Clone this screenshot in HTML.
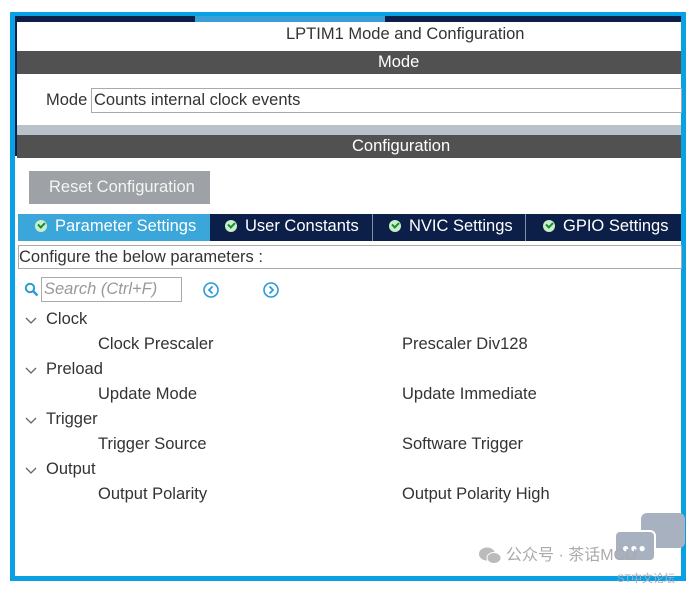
<!DOCTYPE html>
<html><head><style>
*{margin:0;padding:0;box-sizing:border-box}
body{width:693px;height:595px;background:#fff;position:relative;overflow:hidden;font-family:"Liberation Sans","Noto Sans CJK SC",sans-serif;color:#333}
.a{position:absolute}
.t{font-size:16.5px;white-space:nowrap;line-height:19px}
.ck{display:inline-block;width:12px;height:12px;border-radius:50%;background:#c8f0c8;vertical-align:-1px;margin-right:8px;position:relative}
.ck:after{content:"";position:absolute;left:3px;top:2px;width:5px;height:3px;border-left:2px solid #1a8a3a;border-bottom:2px solid #1a8a3a;transform:rotate(-45deg)}
</style></head><body>
<div class="a" style="left:10px;top:12px;width:676px;height:569px;background:#0aa0e4"></div>
<div class="a" style="left:15px;top:16px;width:666px;height:560px;background:#fff"></div>
<div class="a" style="left:15px;top:16px;width:666px;height:6px;background:#0c1f48"></div>
<div class="a" style="left:195px;top:16px;width:190px;height:6px;background:#3a9fd6"></div>
<div class="a" style="left:15px;top:16px;width:2px;height:140px;background:#0c1f48"></div>
<div class="a t" style="left:286px;top:25px;color:#333">LPTIM1 Mode and Configuration</div>
<div class="a" style="left:17px;top:51px;width:664px;height:23px;background:#505150"></div>
<div class="a t" style="left:378px;top:53px;color:#fff">Mode</div>
<div class="a t" style="left:46px;top:91px">Mode</div>
<div class="a" style="left:91px;top:88px;width:591px;height:25px;border:1px solid #aaa"></div>
<div class="a t" style="left:94px;top:91px">Counts internal clock events</div>
<div class="a" style="left:17px;top:125px;width:664px;height:10px;background:#b9c2ca"></div>
<div class="a" style="left:17px;top:135px;width:664px;height:23px;background:#505150"></div>
<div class="a t" style="left:352px;top:137px;color:#fff">Configuration</div>
<div class="a" style="left:29px;top:171px;width:181px;height:33px;background:#9ea2a6"></div>
<div class="a t" style="left:49px;top:178px;color:#f4f4f4">Reset Configuration</div>
<div class="a" style="left:18px;top:214px;width:663px;height:27px;background:#0c1f48"></div>
<div class="a" style="left:18px;top:214px;width:192px;height:27px;background:#3aa6da"></div>
<div class="a" style="left:372px;top:214px;width:1px;height:27px;background:#8090a8"></div>
<div class="a" style="left:525px;top:214px;width:1px;height:27px;background:#8090a8"></div>
<div class="a t" style="left:35px;top:217px;color:#fff"><span class="ck"></span>Parameter Settings</div>
<div class="a t" style="left:225px;top:217px;color:#fff"><span class="ck"></span>User Constants</div>
<div class="a t" style="left:389px;top:217px;color:#fff"><span class="ck"></span>NVIC Settings</div>
<div class="a t" style="left:543px;top:217px;color:#fff"><span class="ck"></span>GPIO Settings</div>
<div class="a" style="left:18px;top:245px;width:664px;height:24px;border:1px solid #aaa"></div>
<div class="a t" style="left:19px;top:248px">Configure the below parameters :</div>
<svg class="a" style="left:24px;top:282px" width="16" height="16" viewBox="0 0 16 16"><circle cx="6" cy="6" r="4.2" fill="none" stroke="#2a9ad8" stroke-width="2"/><path d="M9 9l4.5 4.5" stroke="#2a9ad8" stroke-width="2.4"/></svg>
<div class="a" style="left:41px;top:277px;width:141px;height:25px;border:1px solid #aaa"></div>
<div class="a t" style="left:44px;top:280px;color:#999;font-style:italic">Search (Ctrl+F)</div>
<svg class="a" style="left:202px;top:281px" width="18" height="18" viewBox="0 0 18 18"><circle cx="9" cy="9" r="7" fill="none" stroke="#2a9ad8" stroke-width="1.6"/><path d="M10.5 5.5L7 9l3.5 3.5" fill="none" stroke="#2a9ad8" stroke-width="1.8"/></svg>
<svg class="a" style="left:262px;top:281px" width="18" height="18" viewBox="0 0 18 18"><circle cx="9" cy="9" r="7" fill="none" stroke="#2a9ad8" stroke-width="1.6"/><path d="M7.5 5.5L11 9l-3.5 3.5" fill="none" stroke="#2a9ad8" stroke-width="1.8"/></svg>
<svg class="a" style="left:25px;top:314px" width="14" height="170" viewBox="0 0 14 170"><g fill="none" stroke="#666" stroke-width="1.3"><path d="M1 4l5 5 5-5"/><path d="M1 54l5 5 5-5"/><path d="M1 104l5 5 5-5"/><path d="M1 154l5 5 5-5"/></g></svg>
<div class="a t" style="left:46px;top:310px">Clock</div>
<div class="a t" style="left:46px;top:360px">Preload</div>
<div class="a t" style="left:46px;top:410px">Trigger</div>
<div class="a t" style="left:46px;top:460px">Output</div>
<div class="a t" style="left:98px;top:335px">Clock Prescaler</div>
<div class="a t" style="left:402px;top:335px">Prescaler Div128</div>
<div class="a t" style="left:98px;top:385px">Update Mode</div>
<div class="a t" style="left:402px;top:385px">Update Immediate</div>
<div class="a t" style="left:98px;top:435px">Trigger Source</div>
<div class="a t" style="left:402px;top:435px">Software Trigger</div>
<div class="a t" style="left:98px;top:485px">Output Polarity</div>
<div class="a t" style="left:402px;top:485px">Output Polarity High</div>
<div class="a" style="left:641px;top:513px;width:44px;height:35px;background:#a7b1c0;border-radius:6px"></div>
<div class="a" style="left:614px;top:530px;width:42px;height:32px;background:#a7b1c0;border-radius:6px;border:2px solid #fff"></div>
<div class="a" style="left:622px;top:541px;font-size:12px;color:#fff;letter-spacing:1px">●●●</div>
<svg class="a" style="left:478px;top:546px" width="24" height="20" viewBox="0 0 24 20"><ellipse cx="9" cy="8" rx="8" ry="6.5" fill="#bbb"/><ellipse cx="16" cy="12" rx="7" ry="5.5" fill="#bbb" stroke="#fff" stroke-width="1"/></svg>
<div class="a t" style="left:506px;top:546px;color:#aaa;font-size:16px">公众号 · 茶话MCU</div>
<div class="a t" style="left:617px;top:570px;color:#aab;font-size:11px">ST中文论坛</div>
</body></html>
